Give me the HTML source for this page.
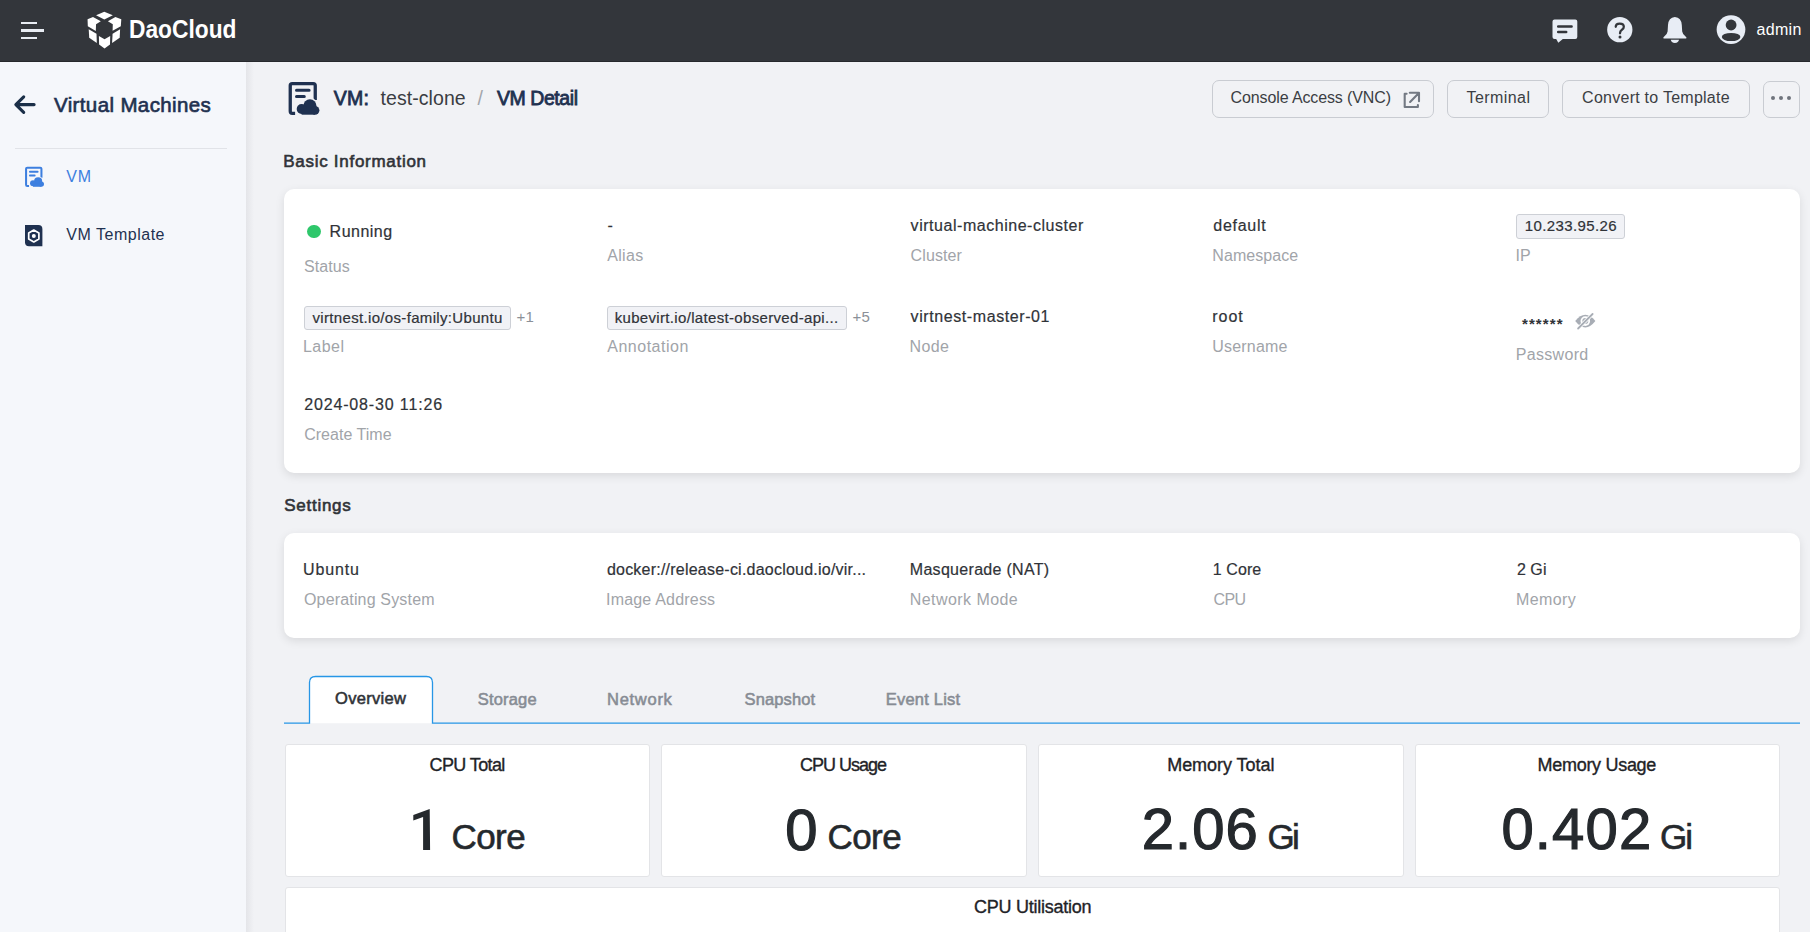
<!DOCTYPE html>
<html><head><meta charset="utf-8">
<style>
*{box-sizing:border-box;margin:0;padding:0}
html,body{width:1810px;height:932px;overflow:hidden;background:#f1f2f5;font-family:"Liberation Sans",sans-serif;color:#32353a}
.a{position:absolute;white-space:nowrap}
#top{position:absolute;left:0;top:0;width:1810px;height:62px;background:#33363b;border-bottom:1px solid #26282c}
#side{position:absolute;left:0;top:62px;width:246px;height:870px;background:#f5f7fb}
#shadow{position:absolute;left:246px;top:62px;width:8px;height:870px;background:linear-gradient(to right,#e4e5e9,#f1f2f5)}
.card{position:absolute;background:#fff;border-radius:10px;box-shadow:0 3px 10px rgba(0,0,0,0.10)}
.tag{position:absolute;height:24px;border:1px solid #cdd0d6;background:#f1f2f6;border-radius:3px}
.btn{position:absolute;height:38px;border:1px solid #c9ccd2;border-radius:7px}
.stat{position:absolute;top:744px;height:133px;background:#fff;border:1px solid #e3e4e7;border-radius:3px}
</style></head>
<body>
<div id="top"></div>
<!-- hamburger -->
<div class="a" style="left:21px;top:22px;width:16px;height:2px;background:#e8ecf3"></div>
<div class="a" style="left:21px;top:29px;width:23px;height:3px;background:#e8ecf3"></div>
<div class="a" style="left:21px;top:37px;width:16px;height:2px;background:#e8ecf3"></div>
<!-- logo -->
<svg class="a" style="left:80px;top:8px" width="50" height="44" viewBox="0 0 50 44" fill="#fff">
  <path d="M16.05 7.3 L24.3 3.8 L32.8 7.3 L24.3 11.6 Z"/>
  <path d="M7.55 11.3 L13 9 L20.8 13.2 L16.05 16.3 L15.8 23.1 L7.8 18.2 Z"/>
  <path d="M27.9 13.2 L35.4 9 L41.3 11.3 L40.8 18.2 L32.6 22.7 L32.8 16.3 Z"/>
  <path d="M8.7 21.2 L16.5 25.7 L16.8 34.9 L9.2 29.7 Z"/>
  <path d="M18.9 27.9 L24.55 31.2 L30.2 27.9 L30 36.4 L24.55 40.4 L19.1 36.4 Z"/>
  <path d="M32.6 25.7 L40.1 21.2 L39.7 29.7 L32.1 34.9 Z"/>
</svg>
<!-- top right icons -->
<svg class="a" style="left:1545px;top:10px" width="150" height="40" viewBox="0 0 150 40">
  <path d="M9.5 9.5 H30.3 Q32.3 9.5 32.3 11.5 V27 Q32.3 29 30.3 29 H17.8 L13.3 32.7 L11.2 29 H9.5 Q7.5 29 7.5 27 V11.5 Q7.5 9.5 9.5 9.5 Z" fill="#e8edf5"/>
  <path d="M13.2 16.6 H26.6 M13.2 22 H21.2" stroke="#33363b" stroke-width="2.5" stroke-linecap="round"/>
  <circle cx="74.8" cy="19.7" r="12.65" fill="#e8edf5"/>
  <path d="M70.75 16.8 Q70.75 13.6 74.8 13.6 Q78.8 13.6 78.8 16.7 Q78.8 18.6 76.9 19.8 Q75 21 75 23.3" stroke="#33363b" stroke-width="2.3" fill="none" stroke-linecap="round"/>
  <circle cx="75" cy="26.9" r="1.5" fill="#33363b"/>
  <path d="M129.9 7 Q136.3 7.5 136.8 15 L137.2 21.5 Q137.6 24.5 140.8 26.8 Q142 27.7 141.2 28.4 H118.6 Q117.8 27.7 119 26.8 Q122.2 24.5 122.6 21.5 L123 15 Q123.5 7.5 129.9 7 Z" fill="#e8edf5"/>
  <path d="M125.8 29.8 H134 Q133.6 32.9 129.9 32.9 Q126.2 32.9 125.8 29.8 Z" fill="#e8edf5"/>
</svg>
<svg class="a" style="left:1705px;top:8px" width="50" height="44" viewBox="0 0 50 44">
  <circle cx="26" cy="21.6" r="14.35" fill="#e8edf5"/>
  <circle cx="26.1" cy="17" r="5.4" fill="#33363b"/>
  <ellipse cx="26.1" cy="29" rx="9.3" ry="4.1" fill="#33363b"/>
</svg>

<div id="side"></div>
<div id="shadow"></div>
<!-- back arrow -->
<svg class="a" style="left:8px;top:88px" width="40" height="34" viewBox="0 0 40 34">
  <path d="M26.1 16.6 H8.5 M15.7 8.9 L7.85 16.6 L15.7 24.3" stroke="#1b2f48" stroke-width="3.1" fill="none" stroke-linecap="round" stroke-linejoin="round"/>
</svg>
<div class="a" style="left:15px;top:148px;width:212px;height:1px;background:#e1e3e8"></div>
<!-- VM icon (blue) -->
<svg class="a" style="left:20.94px;top:163.12px" width="27.06" height="27.06" viewBox="0 0 44 44">
  <path d="M13.5 37.3 H10.25 Q8.25 37.3 8.25 35.3 V9.55 Q8.25 7.55 10.25 7.55 H31.25 Q33.25 7.55 33.25 9.55 V24" stroke="#3d7fdf" stroke-width="3.3" fill="none"/>
  <path d="M14.5 14.3 H27.1 M14.5 20.4 H22.3" stroke="#3d7fdf" stroke-width="3" stroke-linecap="round"/>
  <g stroke="#f5f7fb" stroke-width="3" fill="#f5f7fb">
    <circle cx="27.9" cy="29.9" r="6.6"/><circle cx="19.6" cy="33" r="4.9"/><circle cx="33" cy="34.3" r="4.4"/><rect x="14.7" y="33" width="22.4" height="5.95"/>
  </g>
  <g fill="#3d7fdf">
    <circle cx="27.9" cy="29.9" r="6.6"/><circle cx="19.6" cy="33" r="4.9"/><circle cx="33" cy="34.3" r="4.4"/><path d="M19.6 33 H33 V38.7 H19.6 Z"/>
  </g>
</svg>
<!-- VM template icon -->
<svg class="a" style="left:25px;top:224.6px" width="18" height="22" viewBox="0 0 18 22">
  <path d="M0 0 H13.4 Q17.4 0 17.4 4 V21.2 H4 Q0 21.2 0 17.2 Z" fill="#1f3150"/>
  <path d="M8.8 5.1 L13.9 8.05 V13.95 L8.8 16.9 L3.7 13.95 V8.05 Z" stroke="#fff" stroke-width="1.7" fill="none" stroke-linejoin="round"/>
  <circle cx="8.8" cy="11" r="2" fill="#fff"/>
</svg>

<!-- header icon -->
<svg class="a" style="left:282px;top:76px" width="44" height="44" viewBox="0 0 44 44">
  <path d="M13.5 37.3 H10.25 Q8.25 37.3 8.25 35.3 V9.55 Q8.25 7.55 10.25 7.55 H31.25 Q33.25 7.55 33.25 9.55 V24" stroke="#1f3150" stroke-width="3.3" fill="none"/>
  <path d="M14.5 14.3 H27.1 M14.5 20.4 H22.3" stroke="#1f3150" stroke-width="3" stroke-linecap="round"/>
  <g stroke="#f1f2f5" stroke-width="3" fill="#f1f2f5">
    <circle cx="27.9" cy="29.9" r="6.6"/><circle cx="19.6" cy="33" r="4.9"/><circle cx="33" cy="34.3" r="4.4"/><rect x="14.7" y="33" width="22.4" height="5.95"/>
  </g>
  <g fill="#1f3150">
    <circle cx="27.9" cy="29.9" r="6.6"/><circle cx="19.6" cy="33" r="4.9"/><circle cx="33" cy="34.3" r="4.4"/><path d="M19.6 33 H33 V38.7 H19.6 Z"/>
  </g>
</svg>

<!-- buttons -->
<div class="btn" style="left:1212px;top:80px;width:222px"></div>
<svg class="a" style="left:1395px;top:85px" width="35" height="30" viewBox="0 0 35 30">
  <path d="M11.6 8.8 H9.7 V22 H22.9 V20.1 M14.8 7.7 H24 V16.3 M15.1 16.9 L23.4 8.5" stroke="#737983" stroke-width="2.1" fill="none" stroke-linecap="round" stroke-linejoin="round"/>
</svg>
<div class="btn" style="left:1447px;top:80px;width:102px"></div>
<div class="btn" style="left:1562px;top:80px;width:188px"></div>
<div class="btn" style="left:1763px;top:81px;width:37px;height:37px"></div>
<div class="a" style="left:1771px;top:96px;width:4px;height:4px;border-radius:2px;background:#6f747c"></div>
<div class="a" style="left:1779px;top:96px;width:4px;height:4px;border-radius:2px;background:#6f747c"></div>
<div class="a" style="left:1787px;top:96px;width:4px;height:4px;border-radius:2px;background:#6f747c"></div>

<!-- cards -->
<div class="card" style="left:284px;top:189px;width:1516px;height:284px"></div>
<div class="card" style="left:284px;top:533px;width:1516px;height:105px"></div>
<div class="a" style="left:307px;top:224.5px;width:13.5px;height:13.5px;border-radius:50%;background:#2ec76b"></div>
<div class="tag" style="left:1516px;top:214px;width:109px;height:25px"></div>
<div class="tag" style="left:304px;top:306px;width:207px"></div>
<div class="tag" style="left:607px;top:306px;width:240px"></div>
<div class="a" style="left:1522px;top:316px;font-size:15px;letter-spacing:1.1px;color:#303338;font-weight:bold;line-height:15px">******</div>
<svg class="a" style="left:1570px;top:308px" width="32" height="26" viewBox="0 0 32 26">
  <path d="M5.2 13.1 Q15.3 0.3 25.4 13.1 Q15.3 25.9 5.2 13.1 Z" fill="#a8adb5"/>
  <circle cx="15.3" cy="13.1" r="4.8" fill="#fff"/>
  <circle cx="15.3" cy="13.1" r="3" fill="#a8adb5"/>
  <path d="M8.1 20.5 L22.6 6" stroke="#fff" stroke-width="3.4"/>
  <path d="M8.1 20.5 L22.6 6" stroke="#a8adb5" stroke-width="1.8" stroke-linecap="round"/>
</svg>

<!-- tabs -->
<svg class="a" style="left:0;top:660px" width="1810" height="80" viewBox="0 660 1810 80">
  <path d="M309.5 723.2 V682.5 Q309.5 676.5 315.5 676.5 H426.5 Q432.5 676.5 432.5 682.5 V723.2 Z" fill="#fff"/>
  <path d="M284 723.2 H309.5 V682.5 Q309.5 676.5 315.5 676.5 H426.5 Q432.5 676.5 432.5 682.5 V723.2 H1800" stroke="#2796e6" stroke-width="1.3" fill="none"/>
</svg>

<!-- stats -->
<div class="stat" style="left:285px;width:365px"></div>
<div class="stat" style="left:661px;width:366px"></div>
<div class="stat" style="left:1038px;width:366px"></div>
<div class="stat" style="left:1415px;width:365px"></div>
<div class="stat" style="left:285px;top:887px;width:1495px;height:60px"></div>

<svg class="a" style="left:400px;top:800px" width="40" height="60" viewBox="400 800 40 60"><path d="M429.7 808.9 L430.1 850.1 H423.1 V817 L413.3 820.6 V815.1 Z" fill="#25292d"/></svg>
<div class="a" style="left:129.00px;top:16px;font-size:26px;line-height:26px;color:#ffffff;font-weight:bold;transform:scaleX(0.875);transform-origin:0 0;">DaoCloud</div>
<div class="a" style="left:1756.60px;top:22px;font-size:16px;line-height:16px;color:#ffffff;letter-spacing:0.280px;">admin</div>
<div class="a" style="left:54.00px;top:95px;font-size:20.5px;line-height:20.5px;color:#1f3150;letter-spacing:0.372px;-webkit-text-stroke:0.65px #1f3150;">Virtual Machines</div>
<div class="a" style="left:66.30px;top:169px;font-size:16px;line-height:16px;color:#3d7fdf;letter-spacing:0.828px;">VM</div>
<div class="a" style="left:66.30px;top:227px;font-size:16px;line-height:16px;color:#1f3150;letter-spacing:0.513px;">VM Template</div>
<div class="a" style="left:333.70px;top:89px;font-size:19.5px;line-height:19.5px;color:#1f3150;letter-spacing:0.225px;-webkit-text-stroke:0.8px #1f3150;">VM:</div>
<div class="a" style="left:380.50px;top:89px;font-size:19.5px;line-height:19.5px;color:#3a3d42;letter-spacing:0.067px;">test-clone</div>
<div class="a" style="left:477.40px;top:89px;font-size:19.5px;line-height:19.5px;color:#a3a6ab;">/</div>
<div class="a" style="left:496.90px;top:89px;font-size:19.5px;line-height:19.5px;color:#1f3150;letter-spacing:-0.424px;-webkit-text-stroke:0.8px #1f3150;">VM Detail</div>
<div class="a" style="left:1230.60px;top:90px;font-size:16px;line-height:16px;color:#3b3e43;letter-spacing:-0.120px;">Console Access (VNC)</div>
<div class="a" style="left:1466.60px;top:90px;font-size:16px;line-height:16px;color:#3b3e43;letter-spacing:0.413px;">Terminal</div>
<div class="a" style="left:1582.10px;top:90px;font-size:16px;line-height:16px;color:#3b3e43;letter-spacing:0.257px;">Convert to Template</div>
<div class="a" style="left:283.30px;top:153px;font-size:17px;line-height:17px;color:#303338;letter-spacing:0.714px;-webkit-text-stroke:0.6px #303338;">Basic Information</div>
<div class="a" style="left:284.30px;top:497px;font-size:17px;line-height:17px;color:#303338;letter-spacing:0.725px;-webkit-text-stroke:0.6px #303338;">Settings</div>
<div class="a" style="left:329.60px;top:224px;font-size:16px;line-height:16px;color:#303338;letter-spacing:0.483px;-webkit-text-stroke:0.2px #303338;">Running</div>
<div class="a" style="left:303.90px;top:259px;font-size:16px;line-height:16px;color:#a1a4a9;letter-spacing:0.088px;">Status</div>
<div class="a" style="left:607.50px;top:218px;font-size:16px;line-height:16px;color:#303338;-webkit-text-stroke:0.2px #303338;">-</div>
<div class="a" style="left:607.20px;top:248px;font-size:16px;line-height:16px;color:#a1a4a9;letter-spacing:0.330px;">Alias</div>
<div class="a" style="left:910.60px;top:218px;font-size:16px;line-height:16px;color:#303338;letter-spacing:0.536px;-webkit-text-stroke:0.2px #303338;">virtual-machine-cluster</div>
<div class="a" style="left:910.60px;top:248px;font-size:16px;line-height:16px;color:#a1a4a9;letter-spacing:0.108px;">Cluster</div>
<div class="a" style="left:1213.30px;top:218px;font-size:16px;line-height:16px;color:#303338;letter-spacing:0.718px;-webkit-text-stroke:0.2px #303338;">default</div>
<div class="a" style="left:1212.30px;top:248px;font-size:16px;line-height:16px;color:#a1a4a9;letter-spacing:0.065px;">Namespace</div>
<div class="a" style="left:1524.70px;top:218px;font-size:15px;line-height:15px;color:#303338;letter-spacing:0.396px;-webkit-text-stroke:0.2px #303338;">10.233.95.26</div>
<div class="a" style="left:1515.50px;top:248px;font-size:16px;line-height:16px;color:#a1a4a9;letter-spacing:0.055px;">IP</div>
<div class="a" style="left:312.50px;top:310px;font-size:15px;line-height:15px;color:#303338;letter-spacing:0.331px;-webkit-text-stroke:0.2px #303338;">virtnest.io/os-family:Ubuntu</div>
<div class="a" style="left:516.40px;top:309px;font-size:15px;line-height:15px;color:#8b9098;letter-spacing:0.340px;">+1</div>
<div class="a" style="left:303.00px;top:339px;font-size:16px;line-height:16px;color:#a1a4a9;letter-spacing:0.452px;">Label</div>
<div class="a" style="left:614.70px;top:310px;font-size:15px;line-height:15px;color:#303338;letter-spacing:0.329px;-webkit-text-stroke:0.2px #303338;">kubevirt.io/latest-observed-api...</div>
<div class="a" style="left:852.50px;top:309px;font-size:15px;line-height:15px;color:#8b9098;letter-spacing:0.340px;">+5</div>
<div class="a" style="left:607.20px;top:339px;font-size:16px;line-height:16px;color:#a1a4a9;letter-spacing:0.521px;">Annotation</div>
<div class="a" style="left:910.60px;top:309px;font-size:16px;line-height:16px;color:#303338;letter-spacing:0.587px;-webkit-text-stroke:0.2px #303338;">virtnest-master-01</div>
<div class="a" style="left:909.60px;top:339px;font-size:16px;line-height:16px;color:#a1a4a9;letter-spacing:0.316px;">Node</div>
<div class="a" style="left:1212.30px;top:309px;font-size:16px;line-height:16px;color:#303338;letter-spacing:0.958px;-webkit-text-stroke:0.2px #303338;">root</div>
<div class="a" style="left:1212.30px;top:339px;font-size:16px;line-height:16px;color:#a1a4a9;letter-spacing:0.199px;">Username</div>
<div class="a" style="left:1515.80px;top:347px;font-size:16px;line-height:16px;color:#a1a4a9;letter-spacing:0.307px;">Password</div>
<div class="a" style="left:304.20px;top:397px;font-size:16px;line-height:16px;color:#303338;letter-spacing:0.851px;-webkit-text-stroke:0.2px #303338;">2024-08-30 11:26</div>
<div class="a" style="left:304.20px;top:427px;font-size:16px;line-height:16px;color:#a1a4a9;letter-spacing:0.027px;">Create Time</div>
<div class="a" style="left:303.00px;top:562px;font-size:16px;line-height:16px;color:#303338;letter-spacing:0.861px;-webkit-text-stroke:0.2px #303338;">Ubuntu</div>
<div class="a" style="left:304.00px;top:592px;font-size:16px;line-height:16px;color:#a1a4a9;letter-spacing:0.165px;">Operating System</div>
<div class="a" style="left:606.90px;top:562px;font-size:16px;line-height:16px;color:#303338;letter-spacing:0.226px;-webkit-text-stroke:0.2px #303338;">docker://release-ci.daocloud.io/vir...</div>
<div class="a" style="left:606.00px;top:592px;font-size:16px;line-height:16px;color:#a1a4a9;letter-spacing:0.199px;">Image Address</div>
<div class="a" style="left:909.80px;top:562px;font-size:16px;line-height:16px;color:#303338;letter-spacing:0.298px;-webkit-text-stroke:0.2px #303338;">Masquerade (NAT)</div>
<div class="a" style="left:909.80px;top:592px;font-size:16px;line-height:16px;color:#a1a4a9;letter-spacing:0.432px;">Network Mode</div>
<div class="a" style="left:1212.80px;top:562px;font-size:16px;line-height:16px;color:#303338;letter-spacing:0.075px;-webkit-text-stroke:0.2px #303338;">1 Core</div>
<div class="a" style="left:1213.50px;top:592px;font-size:16px;line-height:16px;color:#a1a4a9;letter-spacing:-0.613px;">CPU</div>
<div class="a" style="left:1516.90px;top:562px;font-size:16px;line-height:16px;color:#303338;letter-spacing:0.070px;-webkit-text-stroke:0.2px #303338;">2 Gi</div>
<div class="a" style="left:1516.00px;top:592px;font-size:16px;line-height:16px;color:#a1a4a9;letter-spacing:0.384px;">Memory</div>
<div class="a" style="left:335.00px;top:690px;font-size:16.5px;line-height:16.5px;color:#2f3237;letter-spacing:0.322px;-webkit-text-stroke:0.55px #2f3237;">Overview</div>
<div class="a" style="left:477.80px;top:691px;font-size:16.5px;line-height:16.5px;color:#878c94;letter-spacing:0.164px;-webkit-text-stroke:0.55px #878c94;">Storage</div>
<div class="a" style="left:607.00px;top:691px;font-size:16.5px;line-height:16.5px;color:#878c94;letter-spacing:0.723px;-webkit-text-stroke:0.55px #878c94;">Network</div>
<div class="a" style="left:744.50px;top:691px;font-size:16.5px;line-height:16.5px;color:#878c94;letter-spacing:0.123px;-webkit-text-stroke:0.55px #878c94;">Snapshot</div>
<div class="a" style="left:885.70px;top:691px;font-size:16.5px;line-height:16.5px;color:#878c94;letter-spacing:0.226px;-webkit-text-stroke:0.55px #878c94;">Event List</div>
<div class="a" style="left:429.60px;top:756px;font-size:18px;line-height:18px;color:#1f2327;letter-spacing:-0.616px;-webkit-text-stroke:0.35px #1f2327;">CPU Total</div>
<div class="a" style="left:451.40px;top:819px;font-size:35px;line-height:35px;color:#25292d;letter-spacing:-0.532px;-webkit-text-stroke:0.6px #25292d;">Core</div>
<div class="a" style="left:800.00px;top:756px;font-size:18px;line-height:18px;color:#1f2327;letter-spacing:-0.991px;-webkit-text-stroke:0.35px #1f2327;">CPU Usage</div>
<div class="a" style="left:785.20px;top:801px;font-size:58px;line-height:58px;color:#25292d;-webkit-text-stroke:1.2px #25292d;">0</div>
<div class="a" style="left:827.40px;top:819px;font-size:35px;line-height:35px;color:#25292d;letter-spacing:-0.532px;-webkit-text-stroke:0.6px #25292d;">Core</div>
<div class="a" style="left:1167.20px;top:756px;font-size:18px;line-height:18px;color:#1f2327;letter-spacing:-0.039px;-webkit-text-stroke:0.35px #1f2327;">Memory Total</div>
<div class="a" style="left:1141.80px;top:800px;font-size:58px;line-height:58px;color:#25292d;letter-spacing:0.991px;-webkit-text-stroke:1.2px #25292d;">2.06</div>
<div class="a" style="left:1267.50px;top:819px;font-size:35px;line-height:35px;color:#25292d;letter-spacing:-2.824px;-webkit-text-stroke:0.6px #25292d;">Gi</div>
<div class="a" style="left:1537.60px;top:756px;font-size:18px;line-height:18px;color:#1f2327;letter-spacing:-0.302px;-webkit-text-stroke:0.35px #1f2327;">Memory Usage</div>
<div class="a" style="left:1501.40px;top:800px;font-size:58px;line-height:58px;color:#25292d;letter-spacing:1.179px;-webkit-text-stroke:1.2px #25292d;">0.402</div>
<div class="a" style="left:1660.00px;top:819px;font-size:35px;line-height:35px;color:#25292d;letter-spacing:-2.024px;-webkit-text-stroke:0.6px #25292d;">Gi</div>
<div class="a" style="left:974.00px;top:898px;font-size:18px;line-height:18px;color:#1f2327;letter-spacing:-0.245px;-webkit-text-stroke:0.35px #1f2327;">CPU Utilisation</div>
</body></html>
